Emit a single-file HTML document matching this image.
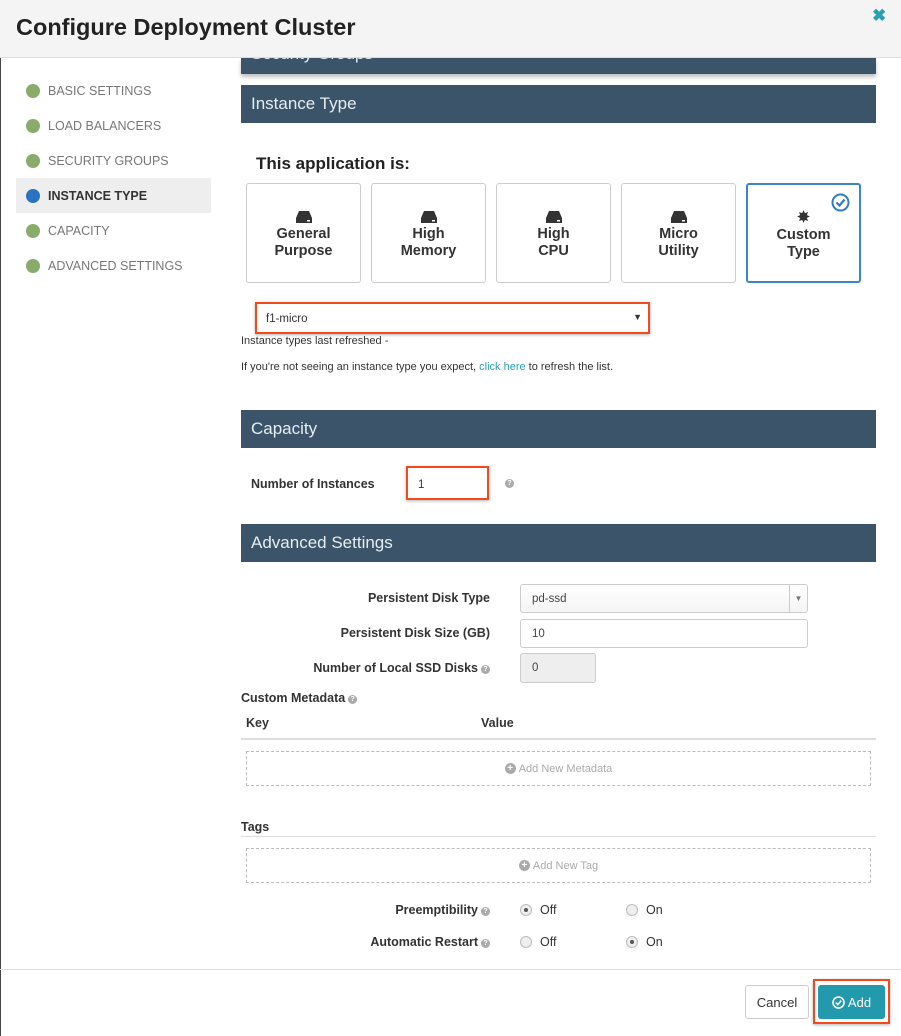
<!DOCTYPE html>
<html><head><meta charset="utf-8"><style>
*{box-sizing:border-box;margin:0;padding:0}
body{width:901px;height:1036px;position:relative;background:#fff;font-family:"Liberation Sans",sans-serif;color:#333;overflow:hidden}
.a{position:absolute}
.hdr{left:0;top:0;width:901px;height:58px;background:#f4f4f4;border-bottom:1px solid #ddd}
.nav{left:26px;font-size:12.5px;color:#777;display:flex;align-items:center;height:20px}
.nav i{display:inline-block;width:14px;height:14px;border-radius:50%;background:#8aac6a;margin-right:8px}
.bar{left:241px;width:635px;background:#3b5469;color:#e6edf2;font-size:17px;padding-left:10px;display:flex;align-items:center}
.card{top:183px;width:115px;height:100px;border:1px solid #ccc;border-radius:3px;text-align:center;font-weight:bold;font-size:14.5px;line-height:17px;padding-top:27px}
.card .ic{display:block;margin:0 auto 3px;width:16px;height:12px}
.lbl{font-weight:bold;font-size:12.5px;text-align:right;width:250px;left:240px}
.inp{border:1px solid #ccc;border-radius:3px;font-size:11.5px;padding-left:11px;display:flex;align-items:center;color:#444}
.q{display:inline-block;width:9px;height:9px;border-radius:50%;background:#aaa;color:#fff;font-size:7px;line-height:9px;text-align:center;font-weight:bold;vertical-align:1px;margin-left:3px}
.dash{left:246px;width:625px;height:35px;border:1px dashed #bbb;color:#aaa;font-size:11px;display:flex;align-items:center;justify-content:center}
.plus{display:inline-block;width:11px;height:11px;border-radius:50%;background:#aaa;color:#fff;font-size:10px;line-height:11px;text-align:center;font-weight:bold;margin-right:3px}
.rd{width:12px;height:12px;border-radius:50%;border:1px solid #bbb;background:#eee}
.rd.on::after{content:"";position:absolute;left:3px;top:3px;width:4px;height:4px;border-radius:50%;background:#555}
.rt{font-size:12.5px}
</style></head><body>
<div class="a" style="left:0;top:0;width:1px;height:1036px;background:#444"></div>
<div class="a hdr"></div>
<div class="a" style="left:16px;top:14px;font-size:23.5px;font-weight:bold;color:#222">Configure Deployment Cluster</div>
<div class="a" style="left:872px;top:6px;font-size:17px;font-weight:bold;color:#2a9fb4">✖</div>

<div class="a" style="left:16px;top:178px;width:195px;height:35px;background:#eee"></div>
<div class="a nav" style="top:81px"><i></i>BASIC SETTINGS</div>
<div class="a nav" style="top:116px"><i></i>LOAD BALANCERS</div>
<div class="a nav" style="top:151px"><i></i>SECURITY GROUPS</div>
<div class="a nav" style="top:186px;color:#333;font-weight:bold"><i style="background:#2a73c0"></i>INSTANCE TYPE</div>
<div class="a nav" style="top:221px"><i></i>CAPACITY</div>
<div class="a nav" style="top:256px"><i></i>ADVANCED SETTINGS</div>

<div class="a bar" style="top:58px;height:16px;box-shadow:0 3px 4px rgba(0,0,0,.25);overflow:hidden;display:block"><span class="a" style="left:10px;top:-14px">Security Groups</span></div>
<div class="a bar" style="top:85px;height:38px">Instance Type</div>
<div class="a" style="left:256px;top:154px;font-size:17px;font-weight:bold;color:#222">This application is:</div>

<div class="a card" style="left:246px"><svg class="ic" viewBox="0 0 16 12"><path d="M3 0h10l3 7v5H0V7z" fill="#333"/><rect x="11" y="9" width="3" height="1.5" fill="#fff"/></svg>General<br>Purpose</div>
<div class="a card" style="left:371px"><svg class="ic" viewBox="0 0 16 12"><path d="M3 0h10l3 7v5H0V7z" fill="#333"/><rect x="11" y="9" width="3" height="1.5" fill="#fff"/></svg>High<br>Memory</div>
<div class="a card" style="left:496px"><svg class="ic" viewBox="0 0 16 12"><path d="M3 0h10l3 7v5H0V7z" fill="#333"/><rect x="11" y="9" width="3" height="1.5" fill="#fff"/></svg>High<br>CPU</div>
<div class="a card" style="left:621px"><svg class="ic" viewBox="0 0 16 12"><path d="M3 0h10l3 7v5H0V7z" fill="#333"/><rect x="11" y="9" width="3" height="1.5" fill="#fff"/></svg>Micro<br>Utility</div>
<div class="a card" style="left:746px;border:2px solid #3a86c8;padding-top:26px"><span style="display:block;font-size:15px;line-height:13px;margin-bottom:3px">✸</span>Custom<br>Type
<svg class="a" style="left:83px;top:8px" width="19" height="19" viewBox="0 0 19 19"><circle cx="9.5" cy="9.5" r="8" fill="none" stroke="#2f7cc2" stroke-width="2"/><path d="M5.5 9.5l3 3 5-6" fill="none" stroke="#2f7cc2" stroke-width="2.2"/></svg></div>

<div class="a" style="left:255px;top:302px;width:395px;height:32px;border:2px solid #f24a1d;box-shadow:0 1px 3px rgba(0,0,0,.3);font-size:11.5px;padding:9px 0 0 9px;color:#333">f1-micro<span class="a" style="right:6px;top:8px;font-size:9px">▼</span></div>
<div class="a" style="left:241px;top:335px;font-size:11px">Instance types last refreshed -</div>
<div class="a" style="left:241px;top:361px;font-size:11px">If you're not seeing an instance type you expect, <span style="color:#2a9fb4">click here</span> to refresh the list.</div>

<div class="a bar" style="top:410px;height:38px">Capacity</div>
<div class="a" style="left:251px;top:477px;font-weight:bold;font-size:12.5px">Number of Instances</div>
<div class="a" style="left:406px;top:466px;width:83px;height:34px;border:2px solid #f24a1d;box-shadow:0 1px 3px rgba(0,0,0,.3);font-size:11.5px;padding:11px 0 0 10px">1</div>
<div class="a" style="left:502px;top:473px"><span class="q">?</span></div>

<div class="a bar" style="top:524px;height:38px">Advanced Settings</div>
<div class="a lbl" style="top:591px">Persistent Disk Type</div>
<div class="a inp" style="left:520px;top:584px;width:288px;height:29px;background:linear-gradient(#fff,#f4f4f4)">pd-ssd<span class="a" style="right:0;top:0;width:18px;height:27px;border-left:1px solid #ccc;font-size:8px;color:#777;display:flex;align-items:center;justify-content:center">▼</span></div>
<div class="a lbl" style="top:626px">Persistent Disk Size (GB)</div>
<div class="a inp" style="left:520px;top:619px;width:288px;height:29px">10</div>
<div class="a lbl" style="top:661px">Number of Local SSD Disks<span class="q">?</span></div>
<div class="a inp" style="left:520px;top:653px;width:76px;height:30px;background:#eee">0</div>

<div class="a" style="left:241px;top:691px;font-weight:bold;font-size:12.5px">Custom Metadata<span class="q">?</span></div>
<div class="a" style="left:246px;top:716px;font-weight:bold;font-size:12.5px">Key</div>
<div class="a" style="left:481px;top:716px;font-weight:bold;font-size:12.5px">Value</div>
<div class="a" style="left:241px;top:738px;width:635px;height:2px;background:#ddd"></div>
<div class="a dash" style="top:751px"><span class="plus">+</span>Add New Metadata</div>

<div class="a" style="left:241px;top:820px;font-weight:bold;font-size:12.5px">Tags</div>
<div class="a" style="left:241px;top:836px;width:635px;height:1px;background:#ddd"></div>
<div class="a dash" style="top:848px"><span class="plus">+</span>Add New Tag</div>

<div class="a lbl" style="top:903px">Preemptibility<span class="q">?</span></div>
<div class="a rd on" style="left:520px;top:904px"></div><div class="a rt" style="left:540px;top:903px">Off</div>
<div class="a rd" style="left:626px;top:904px"></div><div class="a rt" style="left:646px;top:903px">On</div>
<div class="a lbl" style="top:935px">Automatic Restart<span class="q">?</span></div>
<div class="a rd" style="left:520px;top:936px"></div><div class="a rt" style="left:540px;top:935px">Off</div>
<div class="a rd on" style="left:626px;top:936px"></div><div class="a rt" style="left:646px;top:935px">On</div>

<div class="a" style="left:0;top:969px;width:901px;height:1px;background:#ddd"></div>
<div class="a" style="left:745px;top:985px;width:64px;height:34px;border:1px solid #ccc;border-radius:3px;font-size:13px;display:flex;align-items:center;justify-content:center">Cancel</div>
<div class="a" style="left:813px;top:979px;width:77px;height:45px;border:2px solid #f24a1d;box-shadow:0 1px 3px rgba(0,0,0,.3)"></div>
<div class="a" style="left:818px;top:985px;width:67px;height:34px;background:#2399ae;border-radius:3px;color:#fff;font-size:13px;display:flex;align-items:center;justify-content:center"><svg width="13" height="13" viewBox="0 0 13 13" style="margin-right:3px"><circle cx="6.5" cy="6.5" r="5.5" fill="none" stroke="#fff" stroke-width="1.6"/><path d="M3.8 6.6l2 2 3.4-4" fill="none" stroke="#fff" stroke-width="1.6"/></svg>Add</div>
</body></html>
